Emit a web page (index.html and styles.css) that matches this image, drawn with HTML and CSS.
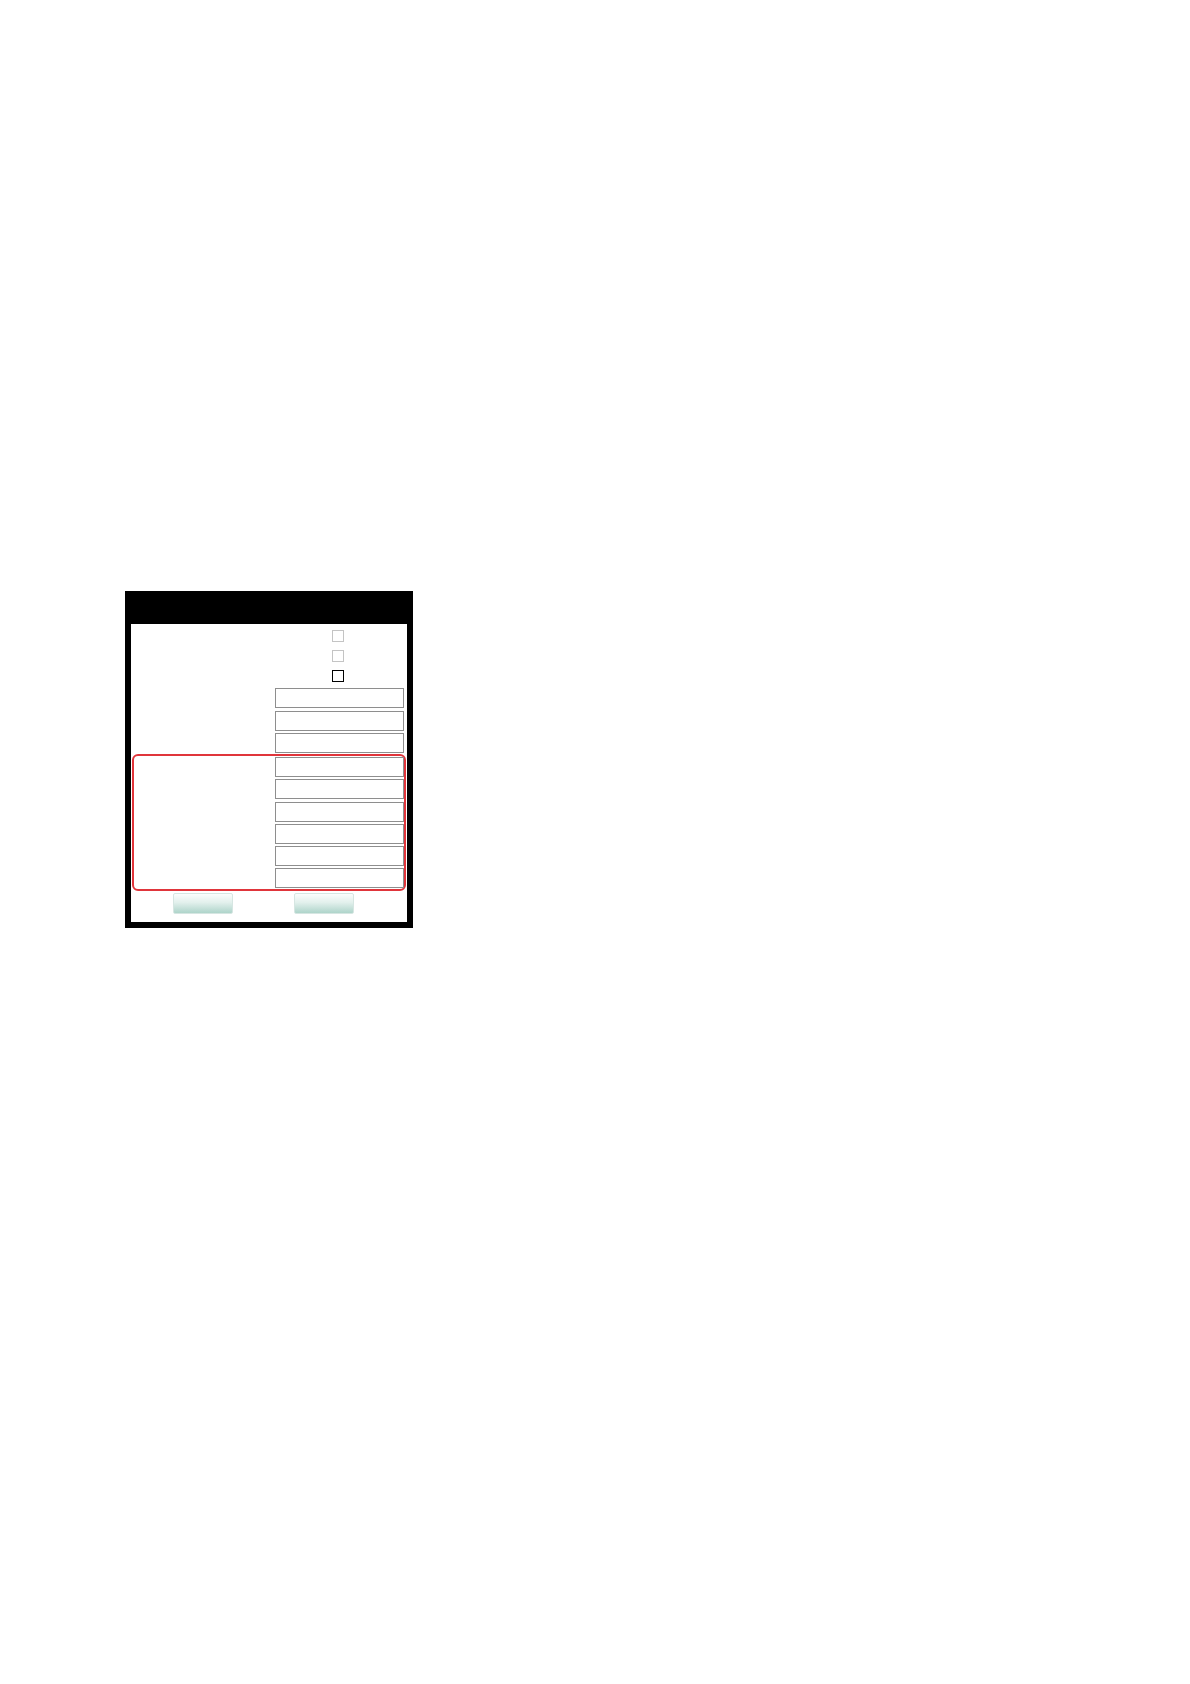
FILE: index.html
```html
<!DOCTYPE html>
<html>
<head>
<meta charset="utf-8">
<link rel="stylesheet" href="styles.css">
</head>
<body>
<div class="dialog">
  <div class="dialog-header"></div>
  <div class="dialog-body">
    <div class="form">
      <div class="row cb-row"><span class="label"></span><span class="cb cb-disabled"></span></div>
      <div class="row cb-row"><span class="label"></span><span class="cb cb-disabled"></span></div>
      <div class="row cb-row last-cb"><span class="label"></span><span class="cb"></span></div>
      <div class="row in-row"><span class="label"></span><input class="field" type="text"></div>
      <div class="row in-row"><span class="label"></span><input class="field" type="text"></div>
      <div class="row in-row before-group"><span class="label"></span><input class="field" type="text"></div>
      <div class="group">
        <div class="row g-row"><span class="label"></span><input class="field" type="text"></div>
        <div class="row g-row"><span class="label"></span><input class="field" type="text"></div>
        <div class="row g-row"><span class="label"></span><input class="field" type="text"></div>
        <div class="row g-row"><span class="label"></span><input class="field" type="text"></div>
        <div class="row g-row"><span class="label"></span><input class="field" type="text"></div>
        <div class="row g-row last-g"><span class="label"></span><input class="field" type="text"></div>
      </div>
      <div class="buttons">
        <button class="btn" type="button"></button>
        <button class="btn" type="button"></button>
      </div>
    </div>
  </div>
</div>
</body>
</html>
```

FILE: styles.css
```css
html, body {
  margin: 0;
  padding: 0;
  background: #ffffff;
  font-family: "Liberation Sans", Arial, sans-serif;
}

.dialog {
  margin: 591px 0 0 125px;
  width: 288px;
  height: 337px;
  background: #000000;
  display: flex;
  flex-direction: column;
  box-sizing: border-box;
}

.dialog-header {
  height: 33px;
  flex: none;
}

.dialog-body {
  margin: 0 6px 6px 6px;
  background: #ffffff;
  flex: 1;
}

.form {
  display: flex;
  flex-direction: column;
  padding-top: 6px;
}

.row {
  display: grid;
  grid-template-columns: 144px 129px;
}

.cb-row {
  height: 12px;
  margin-bottom: 8px;
}

.cb-row.last-cb {
  margin-bottom: 6px;
}

.cb {
  display: block;
  width: 12px;
  height: 12px;
  box-sizing: border-box;
  border: 1px solid #000000;
  background: #ffffff;
  margin-left: 57px;
}

.cb-disabled {
  border-color: #c4c4c4;
}

.in-row {
  height: 20px;
  margin-bottom: 2.5px;
}

.in-row.before-group {
  margin-bottom: 1px;
}

.field {
  display: block;
  margin: 0;
  padding: 0;
  width: 129px;
  height: 20px;
  box-sizing: border-box;
  border: 1px solid #8e8e8e;
  border-radius: 0;
  background: #ffffff;
  outline: none;
}

.group {
  margin-left: 1px;
  width: 274px;
  box-sizing: border-box;
  border: 2px solid #e0353b;
  border-radius: 6px;
  padding: 1px 0 1px 0;
  display: flex;
  flex-direction: column;
}

.group .row {
  grid-template-columns: 141px 129px;
}

.g-row {
  height: 20px;
  margin-bottom: 2.3px;
}

.g-row.last-g {
  margin-bottom: 0;
}

.buttons {
  display: flex;
  gap: 61px;
  padding-left: 42px;
  margin-top: 2px;
}

.btn {
  width: 60px;
  height: 21px;
  margin: 0;
  padding: 0;
  box-sizing: border-box;
  border: 1px solid #d6e6e2;
  border-radius: 2px;
  background: linear-gradient(to bottom, #fbfdfd 0%, #e2f0ec 45%, #aed4ca 100%);
}
```
